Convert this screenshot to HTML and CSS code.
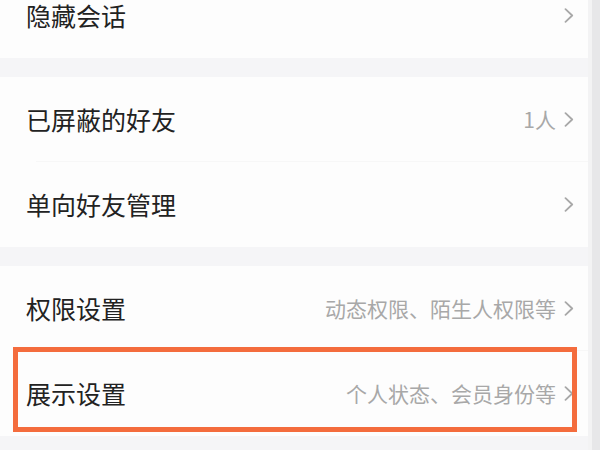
FILE: index.html
```html
<!DOCTYPE html>
<html lang="zh-CN">
<head>
<meta charset="utf-8">
<link rel="stylesheet" href="styles.css">
</head>
<body>
<div class="page">
  <div class="list">
    <div class="group first">
      <div class="row">
        <span class="label">隐藏会话</span>
        <span class="right"><svg class="chev" viewBox="0 0 10 15"><path d="M1.5 1.2 L8.2 7.5 L1.5 13.8"/></svg></span>
      </div>
    </div>
    <div class="gap"></div>
    <div class="group">
      <div class="row divided">
        <span class="label">已屏蔽的好友</span>
        <span class="right"><span class="value">1人</span><svg class="chev" viewBox="0 0 10 15"><path d="M1.5 1.2 L8.2 7.5 L1.5 13.8"/></svg></span>
      </div>
      <div class="row">
        <span class="label">单向好友管理</span>
        <span class="right"><svg class="chev" viewBox="0 0 10 15"><path d="M1.5 1.2 L8.2 7.5 L1.5 13.8"/></svg></span>
      </div>
    </div>
    <div class="gap"></div>
    <div class="group">
      <div class="row divided">
        <span class="label">权限设置</span>
        <span class="right"><span class="value">动态权限、陌生人权限等</span><svg class="chev" viewBox="0 0 10 15"><path d="M1.5 1.2 L8.2 7.5 L1.5 13.8"/></svg></span>
      </div>
      <div class="row highlighted">
        <span class="label">展示设置</span>
        <span class="right"><span class="value">个人状态、会员身份等</span><svg class="chev" viewBox="0 0 10 15"><path d="M1.5 1.2 L8.2 7.5 L1.5 13.8"/></svg></span>
        <div class="mark"></div>
      </div>
    </div>
    <div class="gap tail"></div>
  </div>
  <div class="scrollbar"></div>
</div>
</body>
</html>
```
FILE: styles.css
```css
html, body {
  margin: 0;
  padding: 0;
  background: #f5f5f7;
  overflow: hidden;
}
body {
  font-family: "Noto Sans CJK SC", "Noto Sans", sans-serif;
  width: 600px;
  height: 450px;
}
.page {
  display: flex;
  height: 450px;
}
.list {
  flex: 1;
  display: flex;
  flex-direction: column;
  margin-top: -27px;
  border-right: 4px solid #f3f3f4;
}
.group {
  background: #fdfdfd;
  display: flex;
  flex-direction: column;
}
.gap {
  height: 19px;
  background: #f5f5f7;
}
.gap.tail {
  flex: 1;
}
.row {
  position: relative;
  height: 85px;
  display: flex;
  align-items: center;
  justify-content: space-between;
  padding: 0 14px 0 26px;
}
.row.divided::after {
  content: "";
  position: absolute;
  left: 36px;
  right: 0;
  bottom: 0;
  height: 1px;
  background: #f7f7f7;
}
.label {
  font-size: 25px;
  color: #222222;
  line-height: 1;
}
.right {
  display: flex;
  align-items: center;
  gap: 8px;
}
.value {
  font-size: 21px;
  color: #a8a8a8;
  line-height: 1;
}
.chev {
  width: 10px;
  height: 15px;
  fill: none;
  stroke: #a8a8a8;
  stroke-width: 1.8;
  stroke-linecap: round;
  stroke-linejoin: round;
}
.mark {
  position: absolute;
  left: 13px;
  top: -4px;
  width: 554px;
  height: 75px;
  border: 5px solid #f46c3d;
}
.scrollbar {
  width: 8px;
  background: #e7e7e9;
}
```
